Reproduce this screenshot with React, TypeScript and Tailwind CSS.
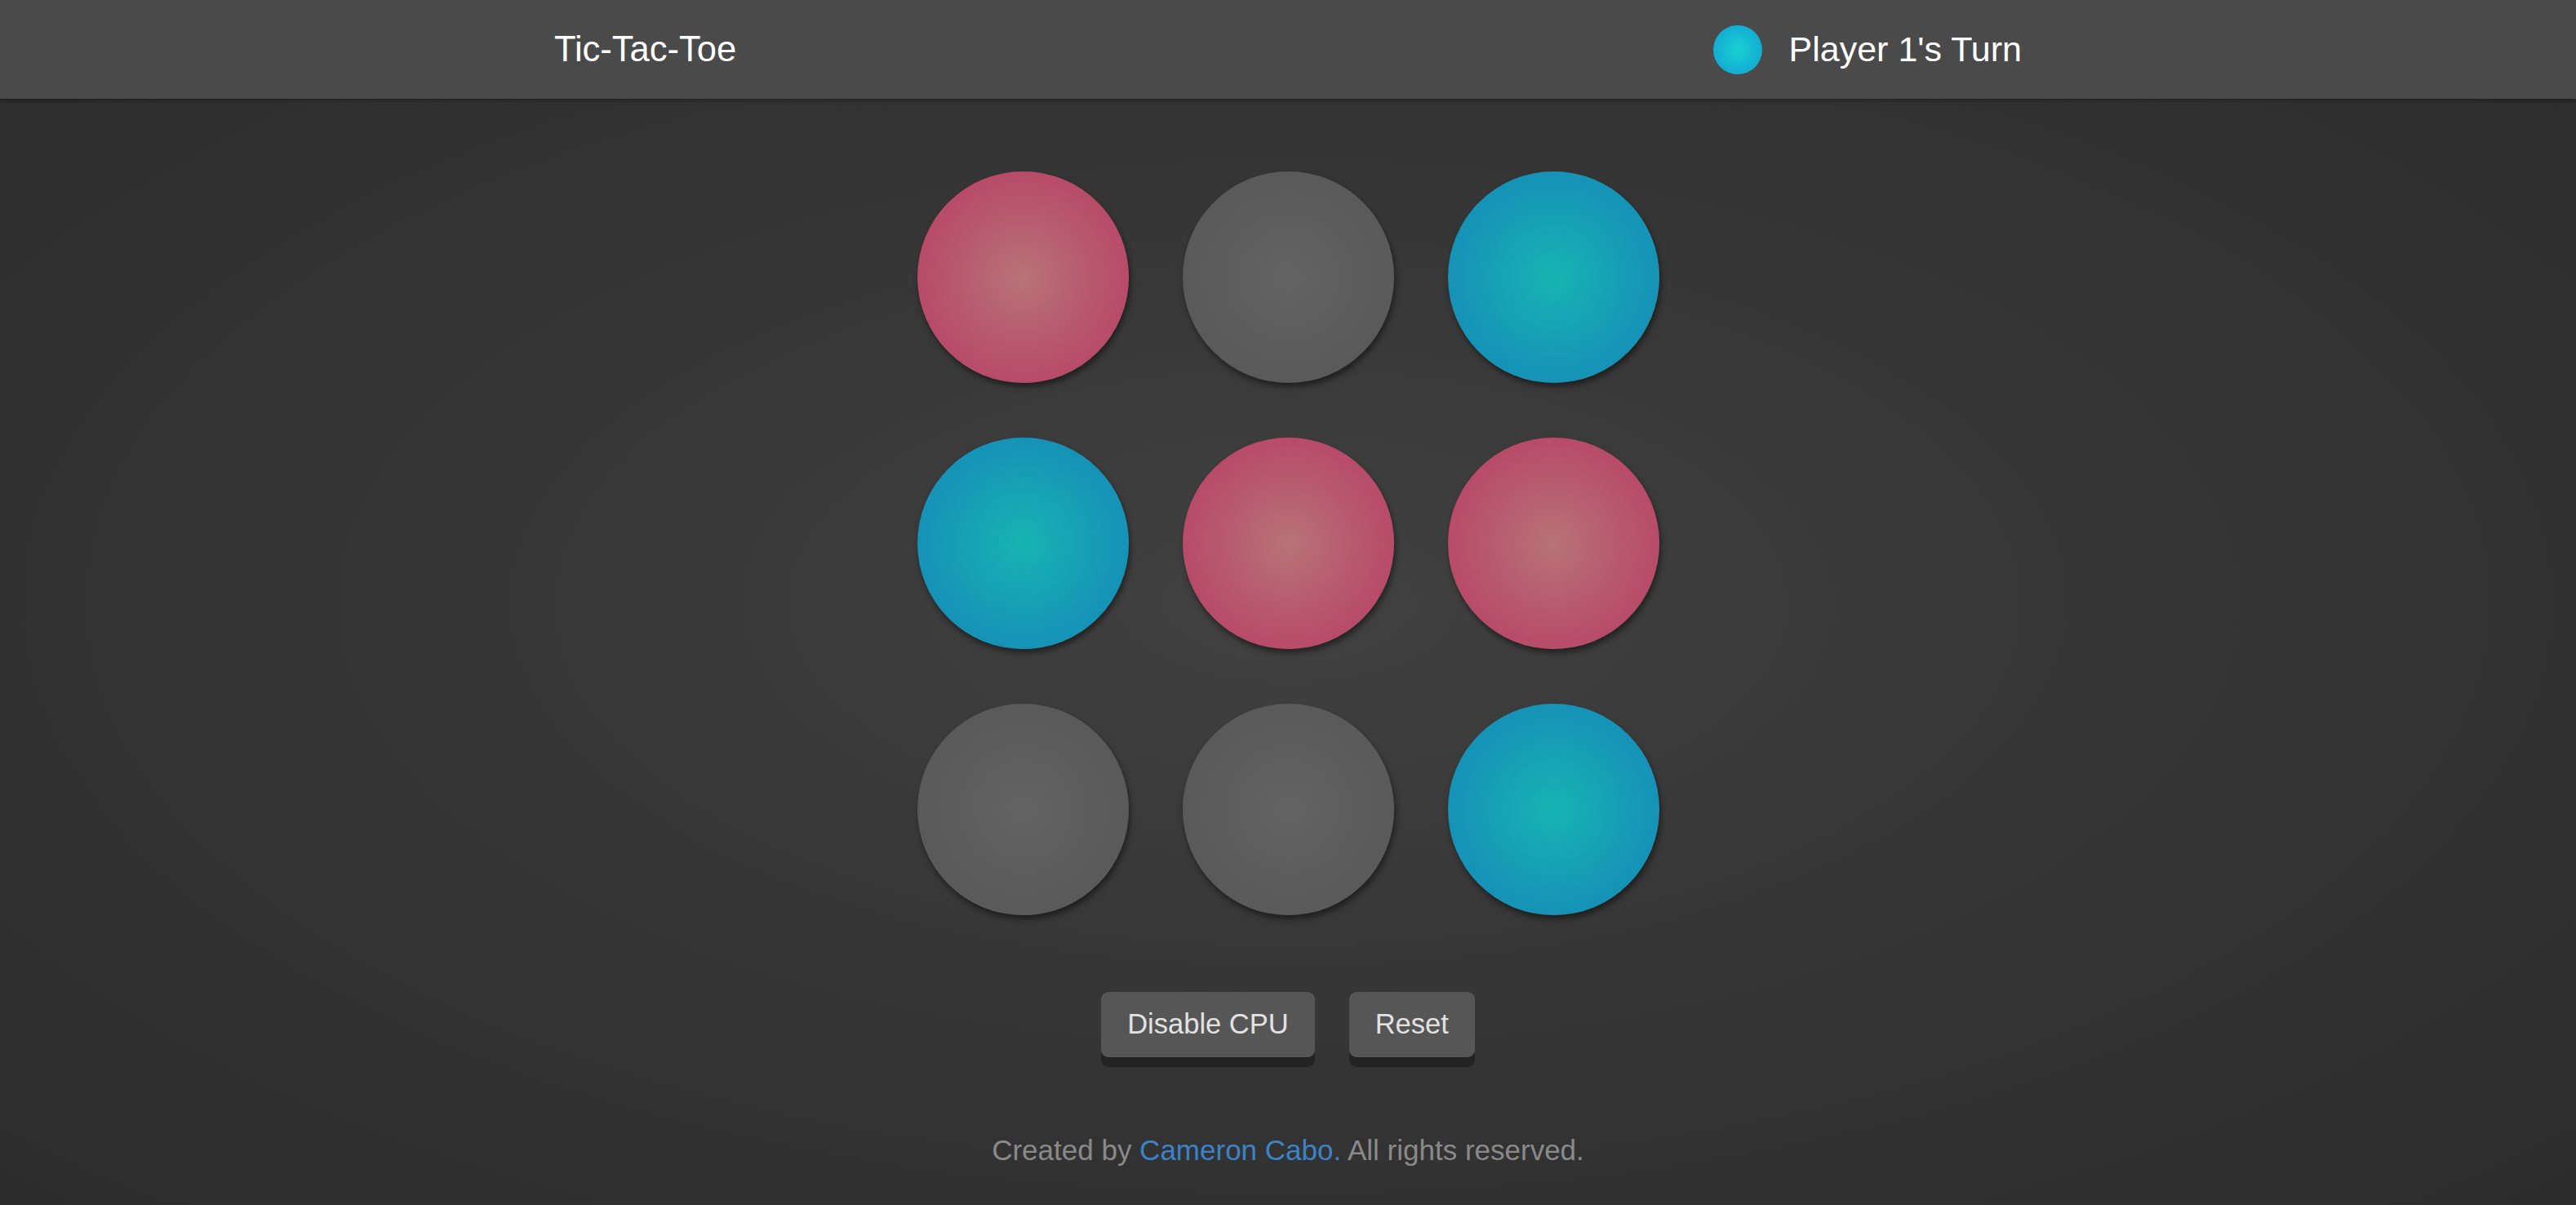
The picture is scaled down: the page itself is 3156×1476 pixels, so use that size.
type Cell = 'p' | 'b' | null

const BOARD: Cell[] = ['p', null, 'b', 'b', 'p', 'p', null, null, 'b']

const CELL_CLASS: Record<string, string> = {
  p: 'bg-[radial-gradient(circle,#b87378_0%,#b7596e_45%,#b93c61_100%)]',
  b: 'bg-[radial-gradient(circle,#17b4b3_0%,#1699b6_55%,#1587b9_100%)]',
  e: 'bg-[radial-gradient(circle,#636363_0%,#5b5b5b_60%,#575757_100%)]',
}

function Piece({ cell }: { cell: Cell }) {
  return (
    <button
      className={`h-[259px] w-[259px] rounded-full shadow-[2px_5px_7px_rgba(0,0,0,0.45)] ${CELL_CLASS[cell ?? 'e']}`}
    />
  )
}

export default function App() {
  return (
    <div className="flex min-h-screen flex-col bg-[radial-gradient(ellipse_at_center,#414141_0%,#363636_45%,#2c2c2c_100%)] font-['Liberation_Sans',Arial,sans-serif]">
      <header className="relative z-10 flex h-[121px] items-center justify-between bg-[#4a4a4a] px-[679px] shadow-[0_2px_5px_rgba(0,0,0,0.35)]">
        <h1 className="text-[43.5px] leading-none text-white">Tic-Tac-Toe</h1>
        <div className="flex items-center gap-[33px]">
          <span className="h-[60px] w-[60px] rounded-full bg-[radial-gradient(circle,#18d2d0_0%,#15b4d3_55%,#139fd6_100%)]" />
          <span className="text-[43px] leading-none text-white">Player 1's Turn</span>
        </div>
      </header>

      <main className="flex flex-1 flex-col items-center">
        <div className="mt-[89px] grid grid-cols-3 gap-x-[66px] gap-y-[67px]">
          {BOARD.map((cell, i) => (
            <Piece key={i} cell={cell} />
          ))}
        </div>

        <div className="mt-[94px] flex gap-[42px]">
          <button className="h-[80px] rounded-[9px] bg-[#565656] px-[32px] text-[34.5px] text-[#e2e2e2] shadow-[0_12px_0_#232323]">
            Disable CPU
          </button>
          <button className="h-[80px] rounded-[9px] bg-[#565656] px-[32px] text-[34.5px] text-[#e2e2e2] shadow-[0_12px_0_#232323]">
            Reset
          </button>
        </div>

        <footer className="mt-[88px] text-[35px] text-[#8a8a8a]">
          Created by <a className="text-[#3d82c6]">Cameron Cabo.</a> All rights reserved.
        </footer>
      </main>
    </div>
  )
}
